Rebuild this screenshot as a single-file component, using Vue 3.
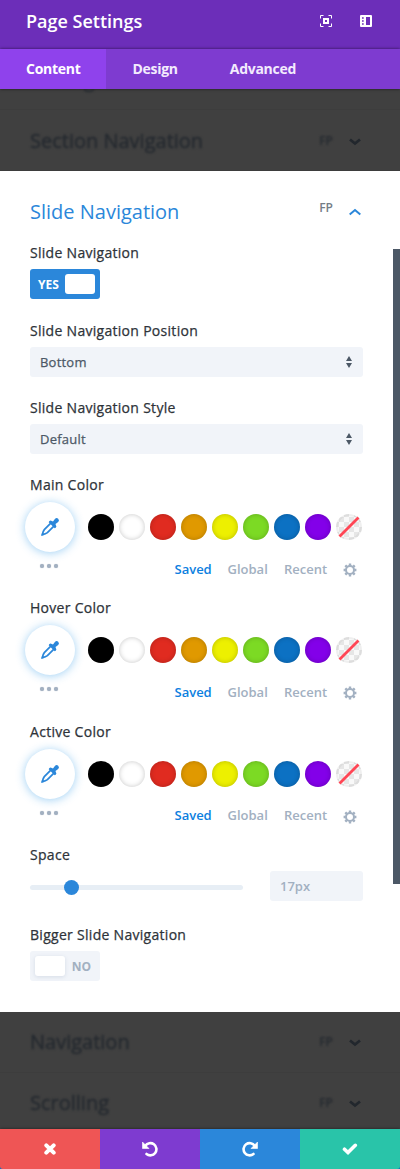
<script setup>
const tabs = ['Content', 'Design', 'Advanced']
const selects = [
  { label: 'Slide Navigation Position', value: 'Bottom' },
  { label: 'Slide Navigation Style', value: 'Default' },
]
const colorFields = ['Main Color', 'Hover Color', 'Active Color']
const swatches = ['black', 'white', 'red', 'orange', 'yellow', 'green', 'blue', 'purple']
</script>

<template>
  <div class="modal">
    <header class="header">
      <h1>Page Settings</h1>
      <svg class="hicon focus" width="12" height="12" viewBox="0 0 12 12" fill="none" stroke="#fff">
        <path d="M.5 3.500v-3h3M8.500 .5h3v3M11.500 8.500v3h-3M3.500 11.500h-3v-3" />
        <path d="M4 4h4v4H4z" stroke-width="2" />
      </svg>
      <svg class="hicon" width="12" height="12" viewBox="0 0 12 12">
        <path fill="#fff" fill-rule="evenodd" d="M1 0h10a1 1 0 0 1 1 1v10a1 1 0 0 1-1 1H1a1 1 0 0 1-1-1V1a1 1 0 0 1 1-1zM6 2v8h4V2zM2 2.200v1.600h1.700V2.200zM2 5.200v1.600h1.700V5.200zM2 8.200v1.600h1.700V8.200z" />
      </svg>
    </header>
    <nav class="tabs">
      <span v-for="(t, i) in tabs" :key="t" class="tab" :class="{ active: i === 0 }">{{ t }}</span>
    </nav>

    <section class="dimmed top">
      <div class="drow first"><span class="dtitle">Settings</span></div>
      <div class="drow">
        <span class="dtitle">Section Navigation</span><span class="dfp">FP</span>
        <svg class="dchev" width="14" height="10" viewBox="0 0 14 10"><path d="M2 2.500l5 4 5-4" /></svg>
      </div>
    </section>

    <main class="panel">
      <div class="title-row">
        <h2>Slide Navigation</h2>
        <span class="fp">FP</span>
        <svg width="12" height="8" viewBox="0 0 12 8" fill="none" stroke="#2b87da" stroke-width="2"><path d="M.7 6.500L6 2l5.300 4.500" /></svg>
      </div>

      <div class="field toggle-field">
        <label>Slide Navigation</label>
        <div class="toggle on"><span class="word">YES</span><span class="knob"></span></div>
      </div>

      <div v-for="s in selects" :key="s.label" class="field">
        <label>{{ s.label }}</label>
        <div class="select">
          <span>{{ s.value }}</span>
          <svg width="6" height="12" viewBox="0 0 6 12" fill="#4c5866"><path d="M0 5l3-5 3 5zM0 7h6l-3 5z" /></svg>
        </div>
      </div>

      <div v-for="(c, i) in colorFields" :key="c" class="field color" :class="{ taller: i === 1, last: i === 2 }">
        <label>{{ c }}</label>
        <div class="color-row">
          <div class="picker">
            <svg width="20" height="20" viewBox="0 0 20 20">
              <path d="M11.300 5.600L4.300 12.600Q3 14.200 2.300 17.700Q5.800 17 7.400 15.700L14.400 8.700" fill="#fff" stroke="#2b87da" stroke-width="1.700" />
              <path d="M1.300 18.700l.8-3 2.200 2.200z" fill="#2b87da" />
              <path d="M9.200 4.300q1.300-1.300 2.600-.2l1.200.4 1.900-2.600q1.600-1.700 3.300-.2 1.600 1.700 0 3.300l-2.700 2 .4 1.200q1.100 1.400-.2 2.600l-1 .5-6-6z" fill="#2b87da" />
            </svg>
          </div>
          <div class="swatches">
            <span v-for="s in swatches" :key="s" class="swatch" :class="s"></span>
            <svg class="none" width="26" height="26" viewBox="0 0 26 26">
              <defs>
                <pattern :id="'check' + i" x="3" y="3" width="10" height="10" patternUnits="userSpaceOnUse">
                  <rect width="10" height="10" fill="#f9f9f9" /><path d="M0 0h5v5H0zM5 5h5v5H5z" fill="#e6e6e6" />
                </pattern>
              </defs>
              <circle cx="13" cy="13" r="13" :fill="`url(#check${i})`" />
              <circle cx="13" cy="13" r="12" fill="none" stroke="#000" stroke-opacity=".04" stroke-width="2" />
              <path d="M4.500 21.500L21.500 4.500" stroke="#ff4655" stroke-width="2.800" stroke-linecap="square" />
            </svg>
          </div>
        </div>
        <div class="color-foot">
          <span class="dots"><i></i><i></i><i></i></span>
          <span class="link saved">Saved</span><span class="link global">Global</span><span class="link recent">Recent</span>
          <svg class="gear" width="14" height="14" viewBox="0 0 14 14">
            <circle cx="7" cy="7" r="4" fill="none" stroke="#a2b0c1" stroke-width="2" />
            <path d="M7 .6v2.100M7 11.300v2.100M.6 7h2.100M11.300 7h2.100M2.300 2.300l1.500 1.500M10.200 10.200l1.500 1.500M11.700 2.300l-1.500 1.500M3.800 10.200l-1.500 1.500" stroke="#a2b0c1" stroke-width="2.400" />
          </svg>
        </div>
      </div>

      <div class="field space">
        <label>Space</label>
        <div class="range-row">
          <div class="track"><span class="thumb"></span></div>
          <div class="num">17px</div>
        </div>
      </div>

      <div class="field">
        <label>Bigger Slide Navigation</label>
        <div class="toggle off"><span class="knob"></span><span class="word">NO</span></div>
      </div>
      <div class="scrollbar"></div>
    </main>

    <section class="dimmed bottom">
      <div v-for="d in ['Navigation', 'Scrolling']" :key="d" class="drow">
        <span class="dtitle">{{ d }}</span><span class="dfp">FP</span>
        <svg class="dchev" width="14" height="10" viewBox="0 0 14 10"><path d="M2 2.500l5 4 5-4" /></svg>
      </div>
    </section>

    <footer class="footer">
      <div class="btn cancel">
        <svg width="12" height="12" viewBox="0 0 12 12"><path d="M2.300 2.300l7.400 7.400M9.700 2.300l-7.400 7.400" stroke="#fff" stroke-width="4" stroke-linecap="round" /></svg>
      </div>
      <div class="btn undo">
        <svg width="16" height="16" viewBox="0 0 16 16"><path d="M3.300 4.800A6.100 6.100 0 1 1 4.500 13" fill="none" stroke="#fff" stroke-width="2.600" stroke-linecap="round" /><path d="M.5 1v6.500H7z" fill="#fff" stroke="#fff" stroke-width=".6" stroke-linejoin="round" /></svg>
      </div>
      <div class="btn redo">
        <svg width="16" height="16" viewBox="0 0 16 16"><path d="M12.700 4.800A6.100 6.100 0 1 0 11.500 13" fill="none" stroke="#fff" stroke-width="2.600" stroke-linecap="round" /><path d="M15.500 1v6.500H9z" fill="#fff" stroke="#fff" stroke-width=".6" stroke-linejoin="round" /></svg>
      </div>
      <div class="btn save">
        <svg width="16" height="12" viewBox="0 0 16 12"><path d="M2.500 6.200l3.500 3.300 7.300-7.200" fill="none" stroke="#fff" stroke-width="3.600" stroke-linecap="round" /></svg>
      </div>
    </footer>
  </div>
</template>

<style>
body { margin: 0; }
</style>

<style scoped>
* { box-sizing: border-box; }
.modal { width: 400px; height: 1169px; display: flex; flex-direction: column; overflow: hidden; font-family: "Open Sans", "Noto Sans", sans-serif; background: #fff; }
svg { display: block; flex: none; }
h1, h2 { margin: 0; }
.header { height: 49px; background: #6c2eb9; display: flex; padding: 8px 28px 0 26px; }
h1 { flex: 1; font-size: 18px; font-weight: 600; line-height: 26px; color: #fff; }
.hicon { margin-top: 7px; }
.focus { margin-right: 28px; }
.tabs { height: 40px; display: flex; background: #7e3bd0; position: relative; box-shadow: 0 0 3px rgba(0, 0, 0, .6); }
.tab { padding: 0 26px; font-size: 14px; font-weight: 700; letter-spacing: -.28px; line-height: 40px; color: #f3ebfd; }
.tab.active { background: #8f42ec; color: #fff; }
.dimmed { background: #404040; overflow: hidden; }
.top { height: 82px; }
.bottom { height: 117px; }
.drow { height: 61px; display: flex; align-items: flex-start; padding: 16px 38px 0 30px; color: #24292f; border-bottom: 1px solid #3d3d3d; }
.drow.first { height: 21px; padding: 0 0 0 30px; }
.first .dtitle { margin-top: -23px; }
.top .drow:last-child { padding-top: 17px; }
.dtitle { flex: 1; font-size: 20px; line-height: 28px; font-weight: 400; filter: blur(.8px); -webkit-text-stroke: .3px #24292f; }
.dfp { font-size: 12px; font-weight: 600; line-height: 18px; margin: 5px 15px 0 0; filter: blur(.8px); }
.dchev { margin-top: 10px; filter: blur(.5px); }
.dchev path { fill: none; stroke: #22272d; stroke-width: 2.800; }
.panel { position: relative; height: 841px; padding: 0 37px 0 30px; background: #fff; display: flex; flex-direction: column; }
.title-row { display: flex; height: 72px; }
h2 { flex: 1; font-size: 20px; font-weight: 400; line-height: 28px; color: #2b87da; margin-top: 27px; }
.fp { font-size: 12px; font-weight: 600; line-height: 18px; color: #747c85; margin: 28px 16px 0 0; }
.title-row svg { margin: 37px 2px 0 0; }
.field { height: 77px; }
.toggle-field { height: 78px; }
.color { height: 123px; }
.taller { height: 124px; }
.space { height: 80px; }
label { display: block; height: 26px; font-size: 14px; font-weight: 400; letter-spacing: .29px; line-height: 20px; color: #2e3339; -webkit-text-stroke: .25px #2e3339; }
.toggle { width: 70px; height: 30px; border-radius: 3px; display: flex; align-items: center; padding: 0 5px; justify-content: space-between; font-size: 12px; font-weight: 700; }
.on { background: #2b87da; color: #fff; padding-left: 8px; }
.off { background: #f1f4f9; color: #a2b0c1; padding-right: 9px; }
.knob { width: 30px; height: 20px; border-radius: 3px; background: #fff; }
.off .knob { box-shadow: 0 1px 4px rgba(60, 90, 130, .15); }
.select { height: 30px; border-radius: 3px; background: #f1f4f9; color: #4c5866; display: flex; align-items: center; justify-content: space-between; padding: 0 11px 0 10px; font-size: 13px; font-weight: 400; letter-spacing: .22px; }
.select span { -webkit-text-stroke: .25px #4c5866; }
.color-row { display: flex; align-items: center; height: 50px; margin: 1px 0 0 -5px; }
.picker { width: 50px; height: 50px; border-radius: 50%; background: #fff; box-shadow: 0 1px 10px rgba(43, 150, 230, .45); display: flex; align-items: center; justify-content: center; }
.swatches { display: flex; gap: 5px; margin-left: 13px; }
.swatch { width: 26px; height: 26px; border-radius: 50%; box-shadow: inset 0 0 5px rgba(0, 0, 0, .22); }
.black { background: #000; }
.white { background: #fff; }
.red { background: #e02b20; }
.orange { background: #e09900; }
.yellow { background: #edf000; }
.green { background: #7cda24; }
.blue { background: #0c71c3; }
.purple { background: #8300e9; }
.color-foot { display: flex; height: 36px; font-size: 13px; font-weight: 600; line-height: 18px; color: #a2b0c1; }
.dots { display: flex; gap: 3px; margin: 12px 0 0 10px; width: 134.500px; }
.dots i { width: 4px; height: 4px; border-radius: 50%; background: #a2b0c1; box-shadow: 0 0 1px #a2b0c1; }
.link { margin-top: 8px; }
.last .link { margin-top: 7px; }
.saved { color: #0c80df; width: 53px; }
.global { width: 56.500px; }
.recent { width: 59px; }
.gear { margin-top: 11px; }
.range-row { display: flex; justify-content: space-between; align-items: center; }
.track { width: 213px; height: 5px; border-radius: 3px; background: #e7eef5; display: flex; align-items: center; margin-top: 2px; }
.thumb { width: 15px; height: 15px; border-radius: 50%; background: #2b87da; margin-left: 34px; }
.num { width: 93px; height: 30px; border-radius: 3px; background: #f1f4f9; color: #a2b0c1; padding-left: 10px; font-size: 13px; font-weight: 600; line-height: 30px; }
.scrollbar { position: absolute; right: 0; top: 78px; width: 7px; height: 635px; background: #4c5866; }
.footer { display: flex; height: 40px; position: relative; box-shadow: 0 0 3px rgba(0, 0, 0, .5); background: #0c71c3; }
.btn { flex: 1; display: flex; align-items: center; justify-content: center; }
.cancel { background: #ef5555; border-bottom-left-radius: 3px; }
.undo { background: #7e3bd0; }
.redo { background: #2b87da; }
.save { background: #29c4a9; border-bottom-right-radius: 3px; }
</style>
